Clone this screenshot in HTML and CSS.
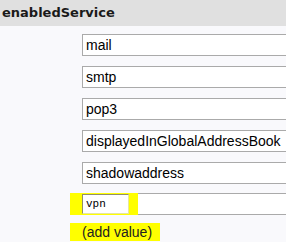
FILE: index.html
```html
<!DOCTYPE html>
<html lang="en">
  <head>
    <meta charset="UTF-8" />
    <meta name="viewport" content="width=device-width, initial-scale=1.0" />
    <title>enabledService</title>
    <link rel="stylesheet" href="styles.css">
  </head>
  <body>
    <div class="attr">
      <div class="attr-name">enabledService</div>
      <div class="values">
        <input class="value" type="text" value="mail" />
        <input class="value" type="text" value="smtp" />
        <input class="value" type="text" value="pop3" />
        <input class="value" type="text" value="displayedInGlobalAddressBook" />
        <input class="value" type="text" value="shadowaddress" />
        <div class="new-row">
          <span class="mark mark-input"><input class="small" type="text" value="vpn" /></span>
          <div class="rest"></div>
        </div>
        <div class="add-row">
          <span class="mark mark-add">(add value)</span>
        </div>
      </div>
    </div>
  </body>
</html>
```

FILE: styles.css
```css
* {
  box-sizing: border-box;
}

body {
  margin: 0;
  background: #f9f9fc;
  font-family: "Liberation Sans", Arial, sans-serif;
  overflow: hidden;
}

.attr-name {
  height: 26px;
  line-height: 26px;
  padding-left: 2px;
  background: #e0e0e0;
  font-family: "DejaVu Sans", Verdana, sans-serif;
  font-weight: bold;
  font-size: 13px;
  color: #1a1a1a;
}

.values {
  display: flex;
  flex-direction: column;
  gap: 10px;
  padding-top: 8px;
  padding-left: 82px;
}

.value {
  display: block;
  width: 100%;
  height: 22px;
  margin: 0;
  padding: 0 3px;
  border: 1px solid #aaa;
  border-right: 0;
  background: #fff;
  font-family: "Liberation Sans", Arial, sans-serif;
  font-size: 14px;
  color: #000;
  outline: none;
}

.new-row {
  display: flex;
  margin-left: -12px;
  margin-top: -1px;
  height: 22px;
}

.mark {
  background: #ffff00;
}

.mark-input {
  display: flex;
  align-items: center;
  padding: 0 9px 0 12px;
}

.small {
  width: 47px;
  height: 20px;
  margin: 0;
  padding: 0 3px;
  border: 1px solid #8f8f6a;
  border-right-color: #e6e6a0;
  border-bottom-color: #e6e6a0;
  background: #fff;
  font-family: "Liberation Mono", "Courier New", monospace;
  font-size: 11px;
  color: #000;
  outline: none;
}

.rest {
  flex: 1;
  border-top: 1px solid #aaa;
  border-bottom: 1px solid #aaa;
  background: #fff;
}

.add-row {
  display: flex;
  margin-left: -12px;
  margin-top: -2px;
}

.mark-add {
  height: 18px;
  line-height: 18px;
  padding: 0 8px 0 12px;
  font-size: 14px;
  color: #222;
}
```
